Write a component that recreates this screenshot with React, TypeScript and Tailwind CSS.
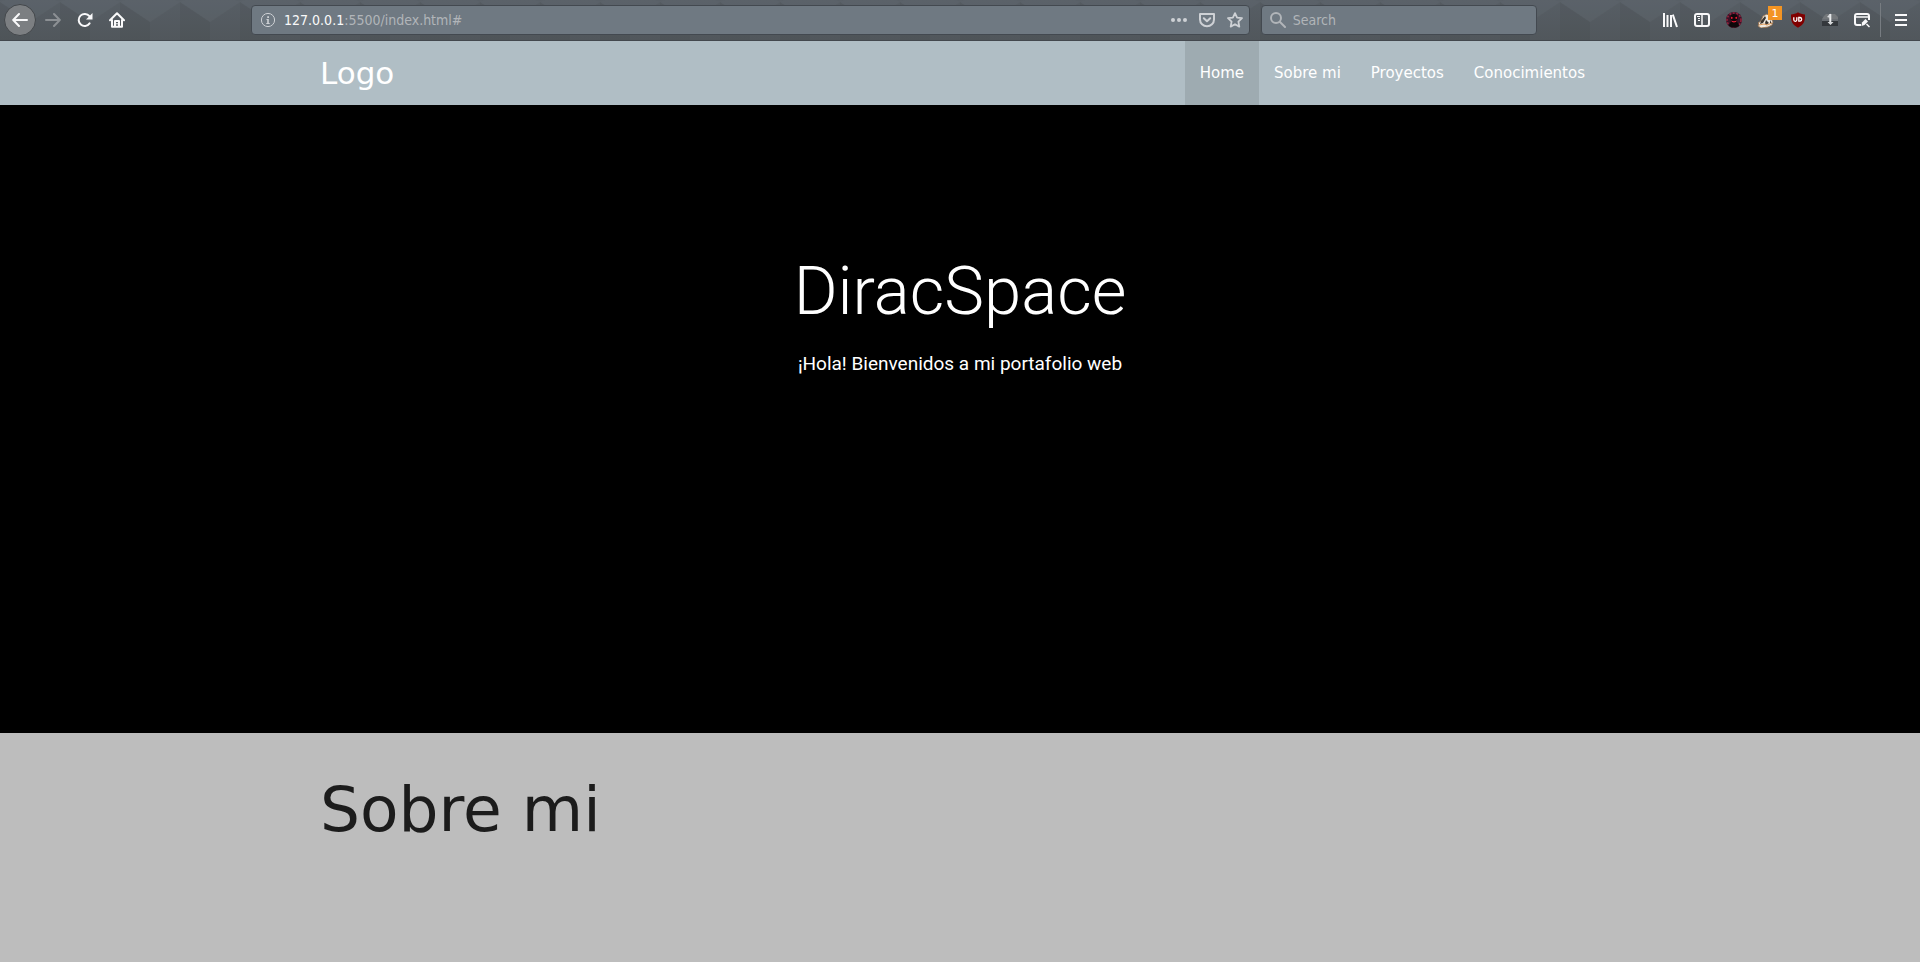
import type { ReactNode } from "react";

function ToolButton({ label, children }: { label: string; children: ReactNode }) {
  return (
    <button type="button" aria-label={label} className="flex h-8 w-8 shrink-0 items-center justify-center text-[#f9f9fa]">
      {children}
    </button>
  );
}

function ToolbarPattern() {
  return (
    <svg className="absolute inset-0 h-full w-full" aria-hidden="true">
      <defs>
        <linearGradient id="shade" x1="0" y1="0" x2="0" y2="1">
          <stop offset="0" stopColor="#596067" />
          <stop offset="1" stopColor="#53595e" />
        </linearGradient>
        <pattern id="cubes" width="60" height="41" patternUnits="userSpaceOnUse">
          <path d="M0 2 30 22V41H0Z" fill="#000" fillOpacity=".06" />
          <path d="M60 2 30 22V41H60Z" fill="#000" fillOpacity=".02" />
          <path d="M0 2 30 22 60 2 54 0H6Z" fill="#6a747c" fillOpacity=".12" />
        </pattern>
      </defs>
      <rect width="100%" height="100%" fill="url(#shade)" />
      <rect width="100%" height="100%" fill="url(#cubes)" />
    </svg>
  );
}

function Browser() {
  return (
    <div className="relative h-[41px] border-b border-[#43484e] bg-[#555b61] font-['DejaVu_Sans',sans-serif]">
      <ToolbarPattern />
      <div className="relative flex h-10 items-center pl-1 pr-[3px]">
        <button type="button" aria-label="Back" className="mr-px flex h-8 w-8 shrink-0 items-center justify-center rounded-full border border-[#43474b] bg-[#7c7f82] text-[#f9f9fa]">
          <svg width="16" height="16" viewBox="0 0 16 16" fill="none" stroke="currentColor" strokeWidth="2" strokeLinecap="round" strokeLinejoin="round"><path d="M15 8H1.5M7 2 1.2 8 7 14" /></svg>
        </button>
        <button type="button" aria-label="Forward" className="flex h-8 w-8 shrink-0 items-center justify-center text-[#8c9094]">
          <svg width="16" height="16" viewBox="0 0 16 16" fill="none" stroke="currentColor" strokeWidth="2" strokeLinecap="round" strokeLinejoin="round"><path d="M1 8h13.5M9 2l5.8 6L9 14" /></svg>
        </button>
        <ToolButton label="Reload">
          <svg width="16" height="16" viewBox="0 0 16 16" fill="none" stroke="currentColor" strokeWidth="2"><path d="M12.6 11.4A6 6 0 1 1 12.4 4.2" strokeLinecap="round" /><path d="M15.5 1v6.5H9Z" fill="currentColor" stroke="none" /></svg>
        </ToolButton>
        <ToolButton label="Home">
          <svg width="16" height="16" viewBox="0 0 16 16" fill="none" stroke="currentColor" strokeWidth="2" strokeLinecap="round" strokeLinejoin="round"><path d="M1 8.3 8 1.3l7 7M3 8v6.8h10V8" /><path d="M6 14.5V9h4v5.5" strokeLinecap="butt" /><path d="M7.3 11.8h1.4" strokeWidth="1" /></svg>
        </ToolButton>
        <div className="flex-[118]" />
        <div className="flex h-[30px] flex-[982] items-center rounded border border-[#434950] bg-[#6f7982] pl-2 pr-[6px] text-[#ced1d5]">
          <svg className="shrink-0" width="16" height="16" viewBox="0 0 16 16" aria-hidden="true"><circle cx="8" cy="8" r="6.6" fill="none" stroke="currentColor" strokeWidth="1" /><path d="M7.2 4.2h1.8v1.7H7.2ZM6.5 7h2.3v4h.9v.9H6.3V11h.9V7.9h-.7Z" fill="currentColor" /></svg>
          <div contentEditable suppressContentEditableWarning role="textbox" aria-label="Address" className="ml-2 flex-1 whitespace-nowrap font-['DejaVu_Sans_Condensed','DejaVu_Sans',sans-serif] text-[14px] leading-5 text-[#b1b5b9] outline-none">
            <span className="text-[#f9f9fa]">127.0.0.1</span>:5500/index.html#
          </div>
          <div className="flex items-center gap-3">
            <button type="button" aria-label="Page actions"><svg width="16" height="16" viewBox="0 0 16 16" fill="currentColor"><circle cx="2" cy="8" r="2" /><circle cx="8" cy="8" r="2" /><circle cx="14" cy="8" r="2" /></svg></button>
            <button type="button" aria-label="Save to Pocket"><svg width="16" height="16" viewBox="0 0 16 16" fill="none" stroke="currentColor" strokeWidth="2" strokeLinejoin="round" strokeLinecap="round"><path d="M1 2h14v5.5a7 6.8 0 0 1-14 0Z" /><path d="M4.8 6.2 8 9.2l3.2-3" /></svg></button>
            <button type="button" aria-label="Bookmark"><svg width="16" height="16" viewBox="0 0 16 16" fill="none" stroke="currentColor" strokeWidth="1.8" strokeLinejoin="round"><path d="m8 1.1 2.1 4.5 4.9.6-3.6 3.4.9 5L8 12.200l-4.300 2.400.9-5L1 6.200l4.900-.6Z" /></svg></button>
          </div>
        </div>
        <div className="ml-[11px] flex h-[30px] flex-[266] items-center rounded border border-[#434950] bg-[#6f7982] pl-2 text-[#b1b5b9]">
          <svg className="shrink-0" width="16" height="16" viewBox="0 0 16 16" fill="none" stroke="currentColor" strokeWidth="2" strokeLinecap="round" aria-hidden="true"><circle cx="6" cy="6" r="5" /><path d="m10 10 5 5" /></svg>
          <input aria-label="Search" placeholder="Search" className="ml-[7px] w-full min-w-0 bg-transparent font-['DejaVu_Sans_Condensed','DejaVu_Sans',sans-serif] text-[14px] leading-5 outline-none placeholder:text-[#b1b5b9]" />
        </div>
        <div className="flex-[117]" />
        <ToolButton label="Library">
          <svg width="16" height="16" viewBox="0 0 16 16" fill="none" stroke="currentColor" strokeWidth="2"><path d="M2 1v14M5.500 3v12M9 3v12M10.800 2.600 15 15" /></svg>
        </ToolButton>
        <ToolButton label="Sidebars">
          <svg width="16" height="16" viewBox="0 0 16 16" fill="none" stroke="currentColor"><rect x="1" y="2" width="14" height="12" rx="2" strokeWidth="2" /><path d="M8 2v12" strokeWidth="1.500" /><path d="M3 4.500h3M4 6.500h2M4 8.500h2" strokeWidth="1" /></svg>
        </ToolButton>
        <ToolButton label="Dark profile">
          <svg width="16" height="16" viewBox="0 0 16 16"><circle cx="8" cy="8" r="8" fill="#3a1226" /><circle cx="8" cy="8" r="7" fill="none" stroke="#93233c" strokeWidth="1.600" strokeDasharray="2 1.500" /><path d="M3 14c0-3 2-3 2-5L4 5c1-4 7-4 8 0l-1 4c0 2 2 2 2 5-3 2-7 2-10 0Z" fill="#0d0709" /><path d="m4.800 4.500 2.700 1.500-2.500 1ZM11.200 4.500 8.500 6l2.500 1ZM5 8.500c2 1 4 1 6 0-1 2.500-5 2.500-6 0Z" fill="#f01934" /></svg>
        </ToolButton>
        <div className="relative">
          <ToolButton label="Privacy extension, 1 notification">
            <svg width="17" height="16" viewBox="0 0 17 16"><path d="m1 14 1-2-1-1 3-2 2-5 4-2 4 4 2 4-1 3-4 2-7 1Z" fill="#eee9e1" stroke="#9b7048" strokeWidth=".8" /><path d="m4 9 4-5 1 2-3 5-3 1ZM9 8l3 3-3 2-1-2ZM13 8l2 4-2-1Z" fill="#3b352f" /><path d="m2 13 5-1 3 1 5-2" fill="none" stroke="#db9859" /></svg>
          </ToolButton>
          <span className="absolute left-[18px] top-[2px] flex h-[14px] w-[14px] items-center justify-center bg-[#f39423] text-[11px] leading-none text-white">1</span>
        </div>
        <ToolButton label="uBlock">
          <svg width="16" height="16" viewBox="0 0 16 16"><path d="M8 .3c2 1.400 4.500 2 7 2.200 0 6-.2 9.500-7 13.200C1.200 12 1 8.500 1 2.500 3.500 2.300 6 1.700 8 .3Z" fill="#800000" /><path d="M3.800 5.300v2.500a1.500 1.500 0 0 0 3 0V5.300M8.800 5.500h1.400a1.900 1.900 0 0 1 0 3.700H8.800Z" fill="none" stroke="#fff" strokeWidth="1.300" /></svg>
        </ToolButton>
        <ToolButton label="Downloads">
          <svg width="16" height="16" viewBox="0 0 16 16"><path d="m2 4 2-2h9l3 3v2H0Z" fill="#73777a" /><path d="M0 7h16v7H0Z" fill="#34383c" /><path d="M0 7h16v2H0Z" fill="#686d72" /><path d="M8.300 2v9" stroke="#eceeef" strokeWidth="2" /><path d="m5 5 3.300-3.500V6ZM5.500 10h6l-3 3Z" fill="#d8dadd" /></svg>
        </ToolButton>
        <ToolButton label="Window picker">
          <svg width="16" height="16" viewBox="0 0 16 16" fill="none" stroke="currentColor" strokeWidth="2"><path d="M7 13H3a2 2 0 0 1-2-2V4a2 2 0 0 1 2-2h10a2 2 0 0 1 2 2v4" /><path d="M1 5h14" strokeWidth="1.500" /><path d="m8 10.500 3.500-3.500 2.500 2.500-3.500 3.500-3 1Z" fill="currentColor" stroke="none" /><path d="m12.500 12 3 3" strokeWidth="1.500" /></svg>
        </ToolButton>
        <div className="ml-[2px] mr-1 h-[34px] w-px bg-[#777c81]" />
        <ToolButton label="Menu">
          <svg width="16" height="16" viewBox="0 0 16 16" stroke="currentColor" strokeWidth="2"><path d="M2 3h12M2 8h12M2 13h12" /></svg>
        </ToolButton>
      </div>
    </div>
  );
}

const links = ["Sobre mi", "Proyectos", "Conocimientos"];

export default function App() {
  return (
    <div className="flex min-h-screen flex-col bg-[#bdbdbd] font-['DejaVu_Sans',sans-serif]">
      <Browser />
      <nav className="bg-[#b0bec5] text-white">
        <div className="mx-auto flex h-16 w-[70%] max-w-[1280px] items-center justify-between">
          <a href="#" className="text-[31px] leading-[64px]">Logo</a>
          <ul className="flex text-[15px] leading-[64px]">
            <li className="bg-[#9eabb1]"><a href="#" className="block px-[15px]">Home</a></li>
            {links.map((link) => (
              <li key={link}><a href="#sobre-mi" className="block px-[15px]">{link}</a></li>
            ))}
          </ul>
        </div>
      </nav>
      <header className="bg-black pb-[355px] pt-[149px] text-center font-[Roboto,sans-serif] text-white">
        <h1 className="text-[67px] font-light leading-[75px]">DiracSpace</h1>
        <p className="mt-[21px] text-[19px] leading-7">¡Hola! Bienvenidos a mi portafolio web</p>
      </header>
      <main id="sobre-mi" className="mx-auto w-[70%] max-w-[1280px] py-[42px]">
        <h2 className="text-[63px] leading-[69px] text-[#1c1c1c]">Sobre mi</h2>
      </main>
    </div>
  );
}
